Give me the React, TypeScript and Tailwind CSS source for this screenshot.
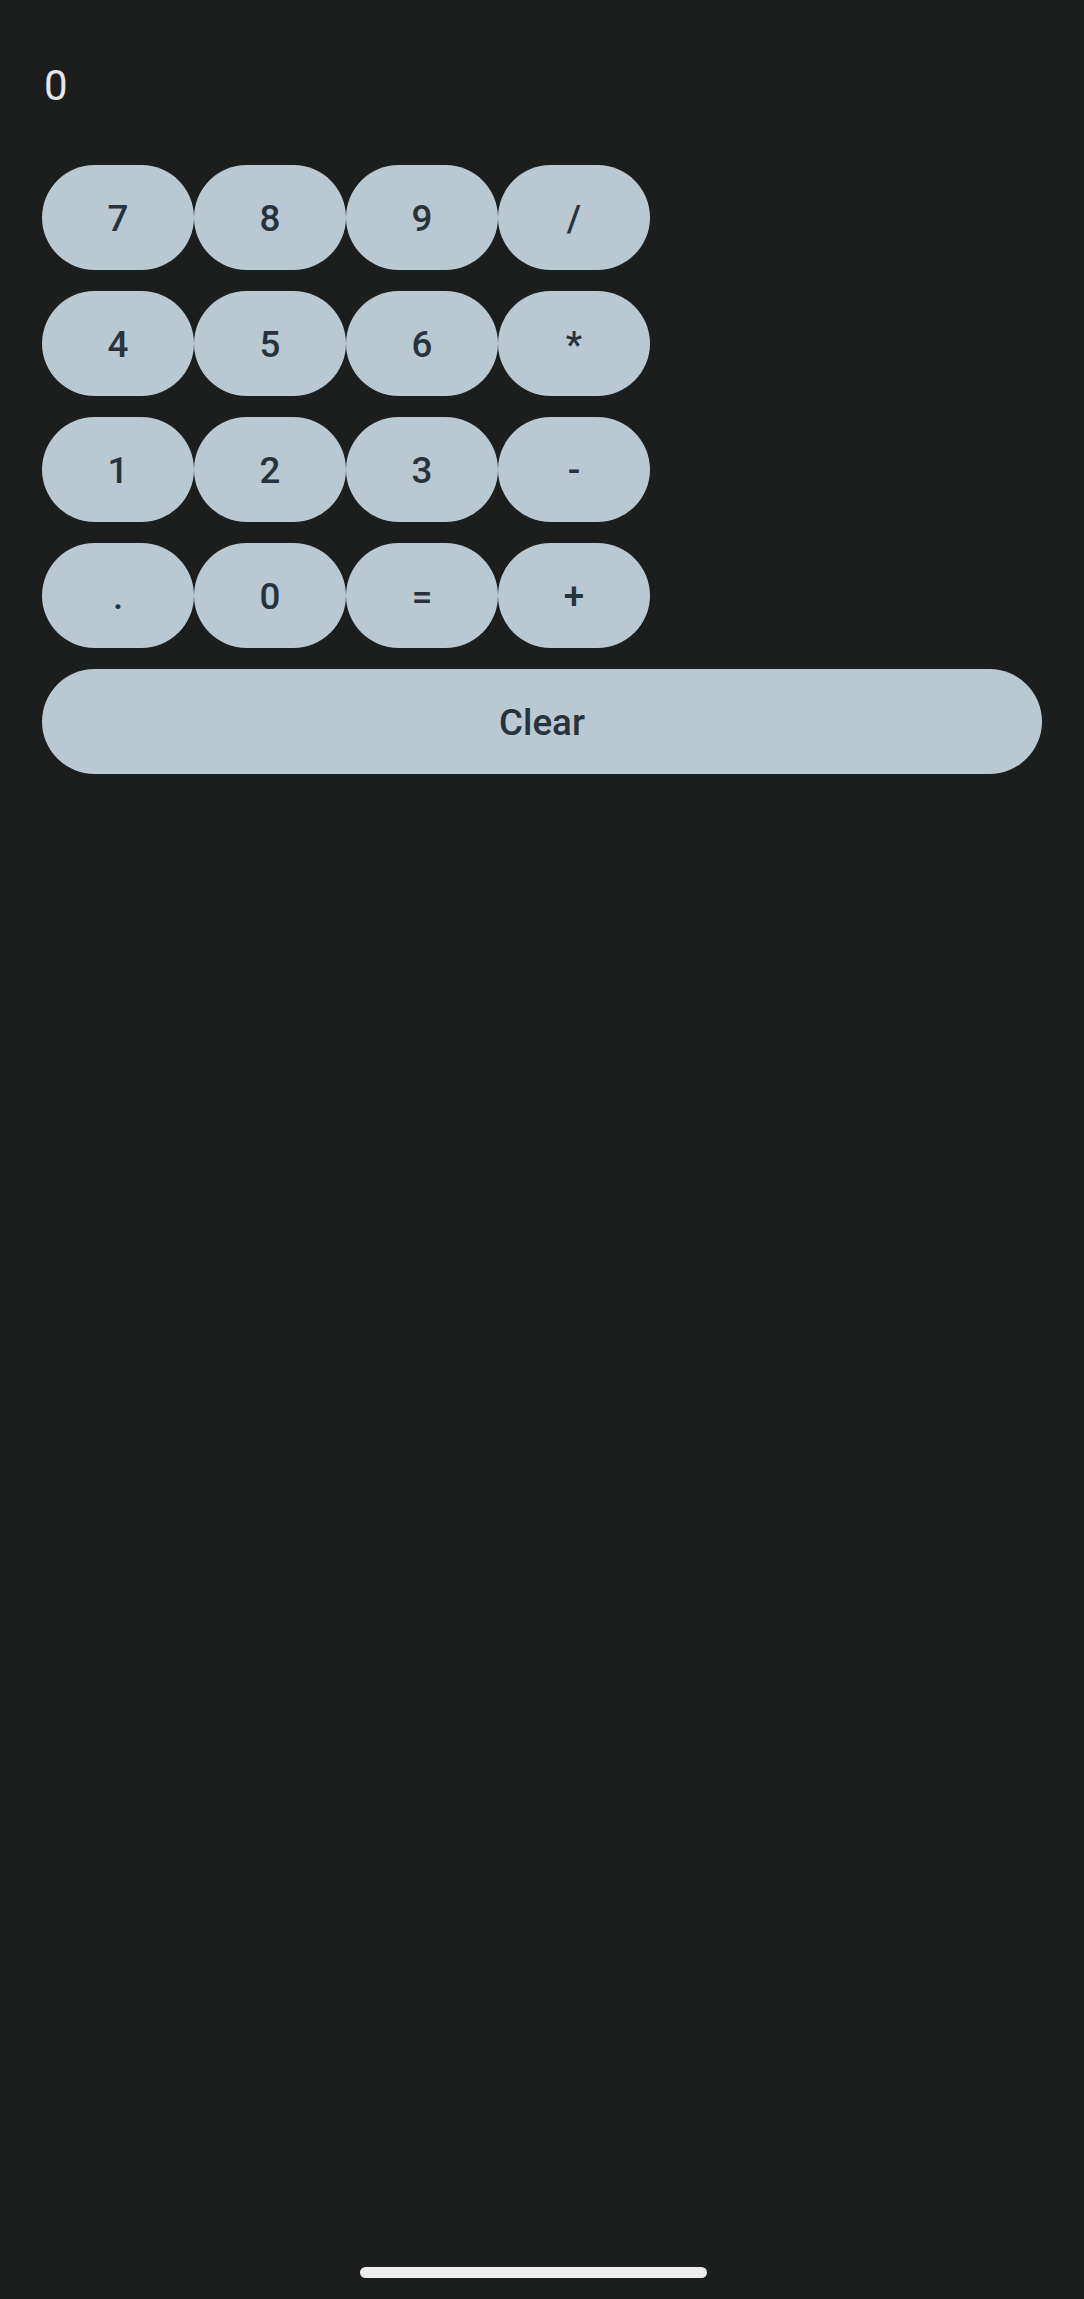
import React from 'react'

const keys = ['7', '8', '9', '/', '4', '5', '6', '*', '1', '2', '3', '-', '.', '0', '=', '+']

const Key = ({ label }: { label: string }) => (
  <button className="h-[105px] w-[152px] rounded-full bg-[#b9c8d1] pt-[3px] text-[36.75px] font-medium text-[#27333c] flex items-center justify-center">
    {label}
  </button>
)

const App = () => {
  return (
    <div
      className="min-h-[2299px] w-full bg-[#1c1d1d] flex flex-col"
      style={{ fontFamily: 'Roboto, "Noto Sans", sans-serif' }}
    >
      <div className="px-[42px] pt-[61px]">
        <p className="pl-[2px] text-[42px] leading-[49px] text-[#e6e6e6]">0</p>
        <div className="mt-[55px] grid grid-cols-[repeat(4,152px)] gap-y-[21px]">
          {keys.map((k) => (
            <Key key={k} label={k} />
          ))}
        </div>
        <button className="mt-[21px] h-[105px] w-full rounded-full bg-[#b9c8d1] pt-[3px] text-[36.75px] font-medium text-[#27333c] flex items-center justify-center">
          Clear
        </button>
      </div>
      <div className="mt-auto mb-[21px] ml-[360px] h-[11px] w-[347px] rounded-full bg-[#ececec]" />
    </div>
  )
}

export default App
